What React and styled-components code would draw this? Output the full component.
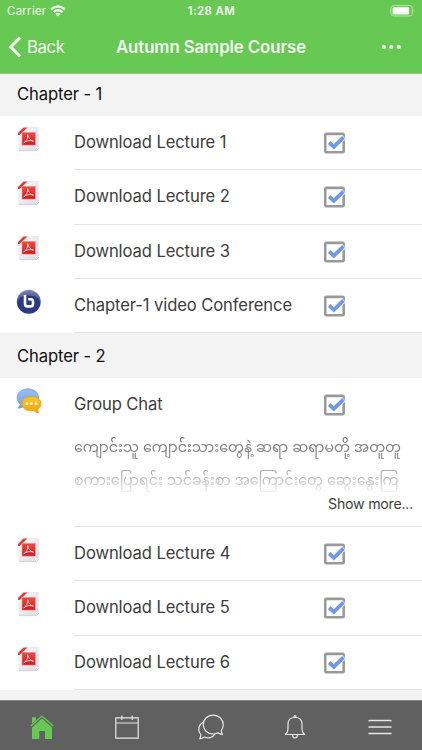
import React from 'react';
import styled, { createGlobalStyle } from 'styled-components';

const GlobalStyle = createGlobalStyle`
    * {
        box-sizing: border-box;
    }
    body {
        margin: 0;
        background: #fff;
        font-family: Inter, Roboto, "Liberation Sans", sans-serif;
    }
`
const Screen = styled.div`
    display: flex;
    flex-direction: column;
    width: 422px;
    height: 750px;
    overflow: hidden;
    background: #fff;
`
const Header = styled.header`
    flex: none;
    height: 74px;
    background: #67c954;
    color: #f2fff0;
    border-bottom: 1px solid #8ccb80;
`
const StatusBar = styled.div`
    display: grid;
    grid-template-columns: 1fr auto 1fr;
    align-items: center;
    height: 21px;
    padding: 1px 6px 0 7px;
    font-size: 11.5px;
`
const Carrier = styled.div`
    display: flex;
    align-items: center;
    gap: 4px;
    letter-spacing: 0.25px;
`
const Clock = styled.div`
    font-weight: 600;
    letter-spacing: 0.4px;
`
const Battery = styled.svg`
    justify-self: end;
`
const NavBar = styled.div`
    display: grid;
    grid-template-columns: 1fr auto 1fr;
    align-items: center;
    height: 52px;
    padding: 0 21px 0 8px;
`
const BackButton = styled.button`
    display: flex;
    align-items: center;
    gap: 5px;
    padding: 0;
    background: none;
    border: none;
    color: inherit;
    font: inherit;
    font-size: 16.8px;
    letter-spacing: -0.4px;
    cursor: pointer;
`
const Title = styled.h1`
    margin: 0 -13px 0 0;
    font-size: 16.8px;
    font-weight: 600;
    letter-spacing: -0.08px;
    white-space: nowrap;
`
const MoreIcon = styled.svg`
    justify-self: end;
`
const Content = styled.main`
    flex: 1;
    overflow: hidden;
`
const ChapterTitle = styled.h2`
    display: flex;
    align-items: center;
    height: ${props => props.$height}px;
    margin: 0;
    padding: 0 17px ${props => props.$first ? 2 : 0}px;
    background: #f3f3f3;
    color: #111;
    font-size: 16.6px;
    font-weight: 400;
    letter-spacing: -0.1px;
`
const Item = styled.div`
    display: flex;
    height: ${props => props.$tall ? '149px' : '54.25px'};
    padding-left: 16px;
`
const IconSlot = styled.div`
    flex: none;
    width: 58px;
    padding-top: 10px;
    svg {
        display: block;
    }
`
const ItemBody = styled.div`
    flex: 1;
    min-width: 0;
    border-bottom: 1px solid #e4e4e4;
`
const ItemRow = styled.div`
    display: flex;
    justify-content: space-between;
    align-items: flex-start;
    padding: 15px 76px 0 0;
`
const ItemName = styled.div`
    color: #3d3d3d;
    font-size: 16.6px;
    line-height: 22px;
    letter-spacing: -0.1px;
    white-space: nowrap;
`
const CheckIcon = styled.svg`
    display: block;
    margin-top: 1px;
`
const Description = styled.p`
    height: 66px;
    margin: 14px 0 0;
    overflow: hidden;
    color: #666;
    font-family: Inter, "Noto Sans Myanmar", "Noto Sans", sans-serif;
    font-size: 14.2px;
    line-height: 33px;
    white-space: nowrap;
    mask-image: linear-gradient(to bottom, #000 0, rgba(0, 0, 0, 0.75) 24px, rgba(0, 0, 0, 0.45) 48px, transparent 66px);
`
const ShowMore = styled.div`
    margin: -2px 9px 0 0;
    color: #3d3d3d;
    font-size: 14.2px;
    line-height: 20px;
    letter-spacing: -0.25px;
    text-align: right;
`
const TabBar = styled.nav`
    display: grid;
    flex: none;
    grid-template-columns: repeat(5, 1fr);
    height: 50px;
    background: #606060;
    border-top: 1px solid #888;
`
const Tab = styled.a`
    display: flex;
    justify-content: center;
    align-items: center;
    padding-top: 3px;
    color: ${props => props.$active ? '#67c954' : '#e6e6e6'};
`

function PdfIcon() {
    return (
        <svg width="25" height="26" viewBox="0 0 25 26">
            <defs>
                <linearGradient id="paper" x1="0" y1="0" x2="1" y2="1">
                    <stop offset="0" stopColor="#fafafc" />
                    <stop offset="1" stopColor="#dcdce6" />
                </linearGradient>
                <linearGradient id="red" x1="0" y1="0" x2="0" y2="1">
                    <stop offset="0" stopColor="#f04a43" />
                    <stop offset="1" stopColor="#cf1a1c" />
                </linearGradient>
            </defs>
            <path d="M3 24.6H20.5L23 22" fill="none" stroke="#c9c9ce" strokeWidth="1" />
            <path d="M10 1.5H22.5V20.5L19 24H3V8Z" fill="url(#paper)" stroke="#e3e3ea" strokeWidth="0.6" />
            <path d="M22.5 20L18.7 24L19.3 20.6Z" fill="#fff" stroke="#cfcfd8" strokeWidth="0.5" />
            <path d="M2 9V7L7.5 1.5H11.5L3.5 9Z" fill="#e23a36" />
            <rect x="6" y="6.3" width="13.4" height="12.8" fill="url(#red)" stroke="#f19995" strokeWidth="0.6" />
            <path d="M7.7 16.8C10.4 15.3 12.3 11.7 11.7 8.6C12.1 11.8 14.4 14.5 17.6 15.2C14.2 13.8 10.5 14.7 7.7 16.8Z" fill="none" stroke="#fff" strokeOpacity="0.85" strokeWidth="0.8" />
        </svg>
    );
}

function ConferenceIcon() {
    return (
        <svg width="26" height="26" viewBox="0 0 26 26">
            <defs>
                <radialGradient id="ball" cx="0.5" cy="0.65" r="0.6">
                    <stop offset="0" stopColor="#2d3f8c" />
                    <stop offset="0.75" stopColor="#29377f" />
                    <stop offset="1" stopColor="#8187ad" />
                </radialGradient>
            </defs>
            <circle cx="12.8" cy="12.8" r="12" fill="url(#ball)" />
            <path d="M3 8.6A10.5 10.5 0 0 1 22 8.6Q13 4.6 3 8.6Z" fill="#747db1" opacity="0.65" />
            <path d="M9 6V15Q9 17.4 11.3 17.4H14.6Q17 17.4 17 15V12.6Q17 10.3 14.6 10.3H12.2" fill="none" stroke="#fff" strokeWidth="2.6" />
        </svg>
    );
}

function ChatIcon() {
    return (
        <svg width="26" height="27" viewBox="0 0 26 27">
            <defs>
                <linearGradient id="blue" x1="0" y1="0" x2="0" y2="1">
                    <stop offset="0" stopColor="#9abff0" />
                    <stop offset="1" stopColor="#73a2e5" />
                </linearGradient>
                <linearGradient id="amber" x1="0" y1="0" x2="0" y2="1">
                    <stop offset="0" stopColor="#ffc629" />
                    <stop offset="1" stopColor="#f6a308" />
                </linearGradient>
            </defs>
            <path d="M12 0.8C5.5 0.8 1.2 4.7 1.2 9.5C1.2 12.6 2.5 14.8 4.4 16.3L2.2 20.2Q5.6 20.2 8 18H12C18.5 18 22.6 14.3 22.6 9.5S18.3 0.8 12 0.8Z" fill="url(#blue)" stroke="#6c98d5" strokeWidth="0.7" />
            <path d="M15.5 8.6C9.8 8.6 5.8 11.6 5.8 15.8S9.8 22.8 15.5 22.8L18 22.6Q20 24.6 22.5 24.9L21.7 21.2C24 19.8 25.1 18 25.1 15.8C25.1 11.6 21 8.6 15.5 8.6Z" fill="url(#amber)" stroke="#de9a22" strokeWidth="0.8" />
            <g fill="#fff">
                <circle cx="10.8" cy="15.7" r="1.4" />
                <circle cx="15.4" cy="15.7" r="1.4" />
                <circle cx="20" cy="15.7" r="1.4" />
            </g>
        </svg>
    );
}

function Check() {
    return (
        <CheckIcon width="22" height="22" viewBox="0 0 22 22">
            <rect x="1.2" y="1.9" width="18.5" height="18.3" rx="1.2" fill="#fff" stroke="#999" strokeWidth="2.6" />
            <path d="M5.5 11L9.5 14.7L19.8 4.8" fill="none" stroke="#fff" strokeWidth="6" />
            <path d="M5.2 10.5L9.8 14.8L19.5 5.3" fill="none" stroke="#6f98e8" strokeWidth="3.8" />
        </CheckIcon>
    );
}

const icons = {
    pdf: PdfIcon,
    conference: ConferenceIcon,
    chat: ChatIcon,
}

const chapters = [
    {
        name: 'Chapter - 1',
        height: 42,
        items: [
            { icon: 'pdf', name: 'Download Lecture 1' },
            { icon: 'pdf', name: 'Download Lecture 2' },
            { icon: 'pdf', name: 'Download Lecture 3' },
            { icon: 'conference', name: 'Chapter-1 video Conference' },
        ],
    },
    {
        name: 'Chapter - 2',
        height: 45,
        items: [
            {
                icon: 'chat',
                name: 'Group Chat',
                text: [
                    'ကျောင်းသူ ကျောင်းသားတွေနဲ့ ဆရာ ဆရာမတို့ အတူတူ',
                    'စကားပြောရင်း သင်ခန်းစာ အကြောင်းတွေ ဆွေးနွေးကြ',
                ],
            },
            { icon: 'pdf', name: 'Download Lecture 4' },
            { icon: 'pdf', name: 'Download Lecture 5' },
            { icon: 'pdf', name: 'Download Lecture 6' },
        ],
    },
    { name: '', height: 45, items: [] },
]

function CourseItem({ item }) {
    const Icon = icons[item.icon]
    return (
        <Item $tall={item.text}>
            <IconSlot><Icon /></IconSlot>
            <ItemBody>
                <ItemRow>
                    <ItemName>{item.name}</ItemName>
                    <Check />
                </ItemRow>
                {item.text &&
                    <>
                        <Description lang="my">{item.text[0]}<br />{item.text[1]}</Description>
                        <ShowMore>Show more...</ShowMore>
                    </>
                }
            </ItemBody>
        </Item>
    );
}

function App() {
    return (
        <Screen>
            <GlobalStyle />
            <Header>
                <StatusBar>
                    <Carrier>
                        Carrier
                        <svg width="16" height="12" viewBox="0 0 16 12" fill="none" stroke="currentColor" strokeWidth="2.1">
                            <path d="M1 4.4Q8 -1.8 15 4.4" />
                            <path d="M3.6 7.2Q8 3.2 12.4 7.2" />
                            <path d="M5.5 8.9Q8 6.8 10.5 8.9L8 11.5Z" fill="currentColor" stroke="none" />
                        </svg>
                    </Carrier>
                    <Clock>1:28 AM</Clock>
                    <Battery width="26" height="12" viewBox="0 0 26 12">
                        <rect x="0.9" y="0.6" width="21.5" height="10.4" rx="2.6" fill="none" stroke="#b5e5ab" />
                        <rect x="2.6" y="2.2" width="16.5" height="7.2" rx="1" fill="#fff" />
                        <path d="M23.7 4Q25.2 5.8 23.7 7.6Z" fill="#b5e5ab" />
                    </Battery>
                </StatusBar>
                <NavBar>
                    <BackButton>
                        <svg width="14" height="22" viewBox="0 0 14 22" fill="none" stroke="currentColor" strokeWidth="3.2">
                            <path d="M12 1.5L2.8 11L12 20.5" />
                        </svg>
                        Back
                    </BackButton>
                    <Title>Autumn Sample Course</Title>
                    <MoreIcon width="20" height="6" viewBox="0 0 20 6" fill="currentColor">
                        <circle cx="2.8" cy="3" r="2.1" />
                        <circle cx="10.3" cy="3" r="2.1" />
                        <circle cx="17.8" cy="3" r="2.1" />
                    </MoreIcon>
                </NavBar>
            </Header>
            <Content>
                {chapters.map((chapter, i) => (
                    <section key={i}>
                        <ChapterTitle $height={chapter.height} $first={i === 0}>{chapter.name}</ChapterTitle>
                        {chapter.items.map(item => <CourseItem key={item.name} item={item} />)}
                    </section>
                ))}
            </Content>
            <TabBar>
                <Tab $active>
                    <svg width="24" height="24" viewBox="0 0 24 24" fill="currentColor">
                        <path d="M2 2.2H6V5.2L2 8.8Z" />
                        <path d="M0.8 11L12 1L23.2 11" fill="none" stroke="currentColor" strokeWidth="1.3" />
                        <path d="M12 3.6L22 12.4V24H15V16H9.3V24H2V12.4Z" />
                    </svg>
                </Tab>
                <Tab>
                    <svg width="24" height="24" viewBox="0 0 24 24" fill="none" stroke="currentColor" strokeWidth="1.2">
                        <path d="M0.8 2.8H23.2V23.2H0.8ZM0.8 8H23.2M6.8 0.5V5M17.2 0.5V5" />
                    </svg>
                </Tab>
                <Tab>
                    <svg width="26" height="26" viewBox="0 0 26 26" fill="none" stroke="currentColor" strokeWidth="1.2">
                        <path d="M15.2 1.2C9.2 1.2 5.2 5.4 5.2 10.6S9.3 20 15.2 20Q17.8 20 20 18.8Q21.8 20.3 24.3 20.5Q23.3 18.5 23.3 16.3C24.7 14.8 25.2 12.7 25.2 10.6C25.2 5.4 21.2 1.2 15.2 1.2Z" />
                        <path d="M5.5 8C2.4 9.7 0.8 12.4 0.8 15.3Q0.8 18.4 2.8 20.6Q2.8 22.9 1.7 24.7Q4.4 24.6 6.5 23C10.2 24.7 14.6 23.8 16.8 20.1" />
                    </svg>
                </Tab>
                <Tab>
                    <svg width="22" height="24" viewBox="0 0 22 24" fill="none" stroke="currentColor" strokeWidth="1.2">
                        <path d="M1 19.5Q4 18 4 13V9Q4 2.5 11 2.5T18 9V13Q18 18 21 19.5ZM8.5 20Q8.8 23 11 23T13.5 20" />
                        <circle cx="11" cy="1.6" r="1" />
                    </svg>
                </Tab>
                <Tab>
                    <svg width="24" height="16" viewBox="0 0 24 16" fill="none" stroke="currentColor" strokeWidth="1.4">
                        <path d="M0.5 1.5H23.5M0.5 8H23.5M0.5 14.5H23.5" />
                    </svg>
                </Tab>
            </TabBar>
        </Screen>
    );
}

export default App;
